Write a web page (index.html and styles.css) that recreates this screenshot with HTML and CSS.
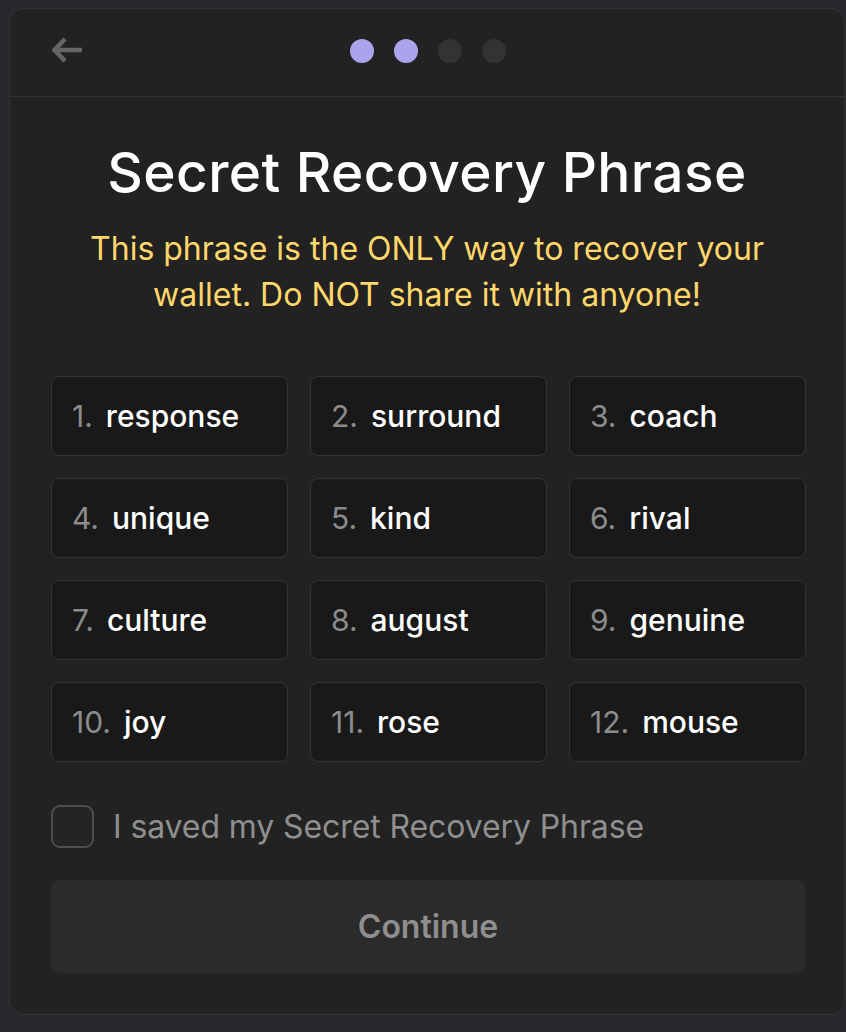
FILE: index.html
```html
<!DOCTYPE html>
<html lang="en">
<head>
<meta charset="utf-8">
<link rel="stylesheet" href="styles.css">
</head>
<body>
<div class="panel">
  <header class="header">
    <button class="back" aria-label="Back">
      <svg width="32" height="28" viewBox="0 0 32 28"><path d="M14 3 L3.5 14 L14 25 M4 14 H31" fill="none" stroke="#666" stroke-width="4.5" stroke-linejoin="miter"/></svg>
    </button>
    <div class="dots">
      <span class="dot on"></span><span class="dot on"></span><span class="dot"></span><span class="dot"></span>
    </div>
  </header>
  <main class="content">
    <h1 class="title">Secret Recovery Phrase</h1>
    <p class="warning">This phrase is the ONLY way to recover your wallet. Do NOT share it with anyone!</p>
    <div class="grid">
      <div class="word"><span class="num">1.</span><span class="w">response</span></div>
      <div class="word"><span class="num">2.</span><span class="w">surround</span></div>
      <div class="word"><span class="num">3.</span><span class="w">coach</span></div>
      <div class="word"><span class="num">4.</span><span class="w">unique</span></div>
      <div class="word"><span class="num">5.</span><span class="w">kind</span></div>
      <div class="word"><span class="num">6.</span><span class="w">rival</span></div>
      <div class="word"><span class="num">7.</span><span class="w">culture</span></div>
      <div class="word"><span class="num">8.</span><span class="w">august</span></div>
      <div class="word"><span class="num">9.</span><span class="w">genuine</span></div>
      <div class="word"><span class="num">10.</span><span class="w">joy</span></div>
      <div class="word"><span class="num">11.</span><span class="w">rose</span></div>
      <div class="word"><span class="num">12.</span><span class="w">mouse</span></div>
    </div>
    <label class="check">
      <span class="box"></span>
      <span class="check-label">I saved my Secret Recovery Phrase</span>
    </label>
    <button class="continue">Continue</button>
  </main>
</div>
</body>
</html>
```

FILE: styles.css
```css
html, body {
  margin: 0;
  padding: 0;
  background: #27282c;
  font-family: Inter, "Noto Sans", sans-serif;
}
body {
  padding: 8px 1px 0 9px;
}
.panel {
  width: 834px;
  height: 1005px;
  background: #222222;
  border: 1px solid #343434;
  border-radius: 14px;
  box-sizing: content-box;
  overflow: hidden;
}
.header {
  height: 87px;
  border-bottom: 1px solid #333333;
  display: flex;
  align-items: center;
  justify-content: center;
  position: relative;
}
.back {
  position: absolute;
  left: 40px;
  top: 27px;
  background: none;
  border: 0;
  padding: 0;
  width: 34px;
  height: 28px;
  display: flex;
  align-items: center;
  justify-content: center;
}
.dots {
  display: flex;
  gap: 20px;
  margin-left: 2px;
  margin-top: -3px;
}
.dot {
  width: 24px;
  height: 24px;
  border-radius: 50%;
  background: #333333;
}
.dot.on {
  background: #aba4ec;
}
.content {
  padding: 0 40px;
  display: flex;
  flex-direction: column;
}
.title {
  margin: 42px 0 0;
  font-size: 55px;
  font-weight: 500;
  letter-spacing: 0.4px;
  color: #ffffff;
  text-align: center;
  line-height: 66px;
}
.warning {
  margin: 21px auto 0;
  width: 720px;
  color: #ffd76b;
  font-size: 32px;
  line-height: 46px;
  text-align: center;
}
.grid {
  margin: 58px 0 0 1px;
  display: grid;
  grid-template-columns: repeat(3, 1fr);
  gap: 22px 22px;
  width: 755px;
}
.word {
  height: 78px;
  border: 1px solid #343434;
  background: #191919;
  border-radius: 8px;
  display: flex;
  align-items: center;
  padding: 0 20px;
  font-size: 30px;
}
.num {
  color: #8c8c8c;
  margin-right: 13px;
}
.w {
  color: #ffffff;
  font-weight: 500;
}
.check {
  display: flex;
  align-items: center;
  margin: 43px 0 0 1px;
  gap: 19px;
}
.box {
  width: 39px;
  height: 39px;
  border: 2px solid #4e4e4e;
  border-radius: 9px;
  background: #242424;
}
.check-label {
  color: #8f8f8f;
  font-size: 32px;
  letter-spacing: -0.1px;
}
.continue {
  margin-top: 32px;
  height: 93px;
  width: 756px;
  border: 0;
  border-radius: 10px;
  background: #2b2b2b;
  color: #8e8e8e;
  font-family: Inter, "Noto Sans", sans-serif;
  font-size: 32px;
  font-weight: 600;
}
```
